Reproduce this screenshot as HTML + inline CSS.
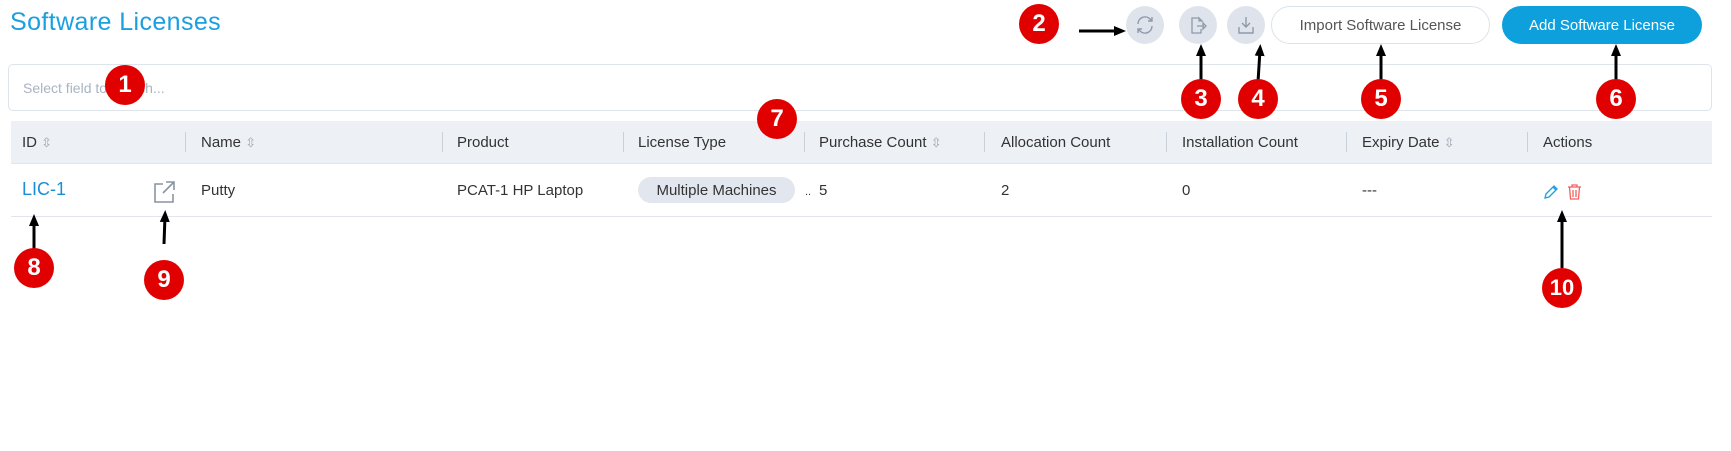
<!DOCTYPE html>
<html><head><meta charset="utf-8"><style>
*{box-sizing:border-box;margin:0;padding:0}
body{width:1731px;height:451px;background:#fff;font-family:"Liberation Sans",sans-serif;position:relative;overflow:hidden;color:#333}
.a{position:absolute}
.title{left:10px;top:8px;font-size:25px;color:#1a9fe0;letter-spacing:0.4px}
.circ{width:38px;height:38px;border-radius:50%;background:#dfe4ec;top:6px}
.btn{top:6px;height:38px;border-radius:19px;font-size:15px;display:flex;align-items:center;justify-content:center}
.search{left:8px;top:64px;width:1704px;height:47px;border:1px solid #dfe4ea;border-radius:5px}
.ph{left:23px;top:80px;font-size:14px;color:#a9b4c2}
.head{left:11px;top:121px;width:1701px;height:43px;background:#edf0f5;border-bottom:1px solid #e2e6ec}
.ht{top:134px;font-size:15px;color:#333}
.dv{top:132px;width:1px;height:20px;background:#c8d0da}
.rt{top:182px;font-size:15px;color:#333}
.rowb{left:11px;top:216px;width:1701px;height:1px;background:#e2e6ec}
.srt{font-size:13px;color:#a0a8b4}
.ann{width:40px;height:40px;border-radius:50%;background:#e00000;color:#fff;font-weight:bold;font-size:24px;display:flex;align-items:center;justify-content:center}
</style></head><body>
<div class="a title">Software Licenses</div>

<div class="a circ" style="left:1126px"><svg width="38" height="38" viewBox="0 0 38 38"><path d="M12 18a7 7 0 0 1 12-5l2 2M26 20a7 7 0 0 1-12 5l-2-2M26 11v4h-4M12 27v-4h4" fill="none" stroke="#8d99aa" stroke-width="1.4"/></svg></div>
<div class="a circ" style="left:1179px"><svg width="38" height="38" viewBox="0 0 38 38"><path d="M20 12h-7v15h9v-4M20 12l3 3h-3zM18 20h7M24 17l3 3-3 3z" fill="none" stroke="#8d99aa" stroke-width="1.3"/></svg></div>
<div class="a circ" style="left:1227px"><svg width="38" height="38" viewBox="0 0 38 38"><path d="M19 11v10M15 17l4 4 4-4M12 21v6h14v-6" fill="none" stroke="#8d99aa" stroke-width="1.4"/></svg></div>
<div class="a btn" style="left:1271px;width:219px;border:1px solid #dde3ea;background:#fff;color:#555">Import Software License</div>
<div class="a btn" style="left:1502px;width:200px;background:#0ea0dd;color:#fff">Add Software License</div>

<div class="a search"></div>
<div class="a ph">Select field to search...</div>

<div class="a head"></div>
<div class="a ht" style="left:22px">ID <span class="srt">⇳</span></div>
<div class="a dv" style="left:185px"></div>
<div class="a ht" style="left:201px">Name <span class="srt">⇳</span></div>
<div class="a dv" style="left:442px"></div>
<div class="a ht" style="left:457px">Product</div>
<div class="a dv" style="left:623px"></div>
<div class="a ht" style="left:638px">License Type</div>
<div class="a dv" style="left:804px"></div>
<div class="a ht" style="left:819px">Purchase Count <span class="srt">⇳</span></div>
<div class="a dv" style="left:984px"></div>
<div class="a ht" style="left:1001px">Allocation Count</div>
<div class="a dv" style="left:1166px"></div>
<div class="a ht" style="left:1182px">Installation Count</div>
<div class="a dv" style="left:1346px"></div>
<div class="a ht" style="left:1362px">Expiry Date <span class="srt">⇳</span></div>
<div class="a dv" style="left:1527px"></div>
<div class="a ht" style="left:1543px">Actions</div>

<div class="a" style="left:22px;top:179px;font-size:18px;color:#1a8fd6">LIC-1</div>
<svg class="a" style="left:152px;top:180px" width="26" height="24" viewBox="0 0 26 24"><path d="M11 4H3v18h18v-8M14 2h8v8M22 2L11 13" fill="none" stroke="#8a94a3" stroke-width="1.6"/></svg>
<div class="a rt" style="left:201px">Putty</div>
<div class="a rt" style="left:457px">PCAT-1 HP Laptop</div>
<div class="a" style="left:638px;top:177px;width:157px;height:26px;border-radius:13px;background:#e2e6ee;font-size:15px;color:#333;display:flex;align-items:center;justify-content:center">Multiple Machines</div>
<div class="a rt" style="left:805px;font-size:11px;top:186px">..</div>
<div class="a rt" style="left:819px">5</div>
<div class="a rt" style="left:1001px">2</div>
<div class="a rt" style="left:1182px">0</div>
<div class="a rt" style="left:1362px">---</div>
<svg class="a" style="left:1543px;top:184px" width="16" height="16" viewBox="0 0 16 16"><path d="M2 14l1-4 8-8 3 3-8 8zM10 3l3 3" fill="none" stroke="#1a9fe0" stroke-width="1.3"/></svg>
<svg class="a" style="left:1567px;top:184px" width="15" height="16" viewBox="0 0 15 16"><path d="M1 3h13M5 3V1h5v2M2.5 3l1 12h8l1-12M6 6v7M9 6v7" fill="none" stroke="#f06060" stroke-width="1.3"/></svg>
<div class="a rowb"></div>

<svg class="a" style="left:0;top:0" width="1731" height="451" viewBox="0 0 1731 451">
<defs><marker id="m" markerUnits="userSpaceOnUse" markerWidth="12" markerHeight="12" refX="6" refY="6" orient="auto"><path d="M0 1L12 6L0 11z" fill="#000"/></marker></defs>
<g stroke="#000" stroke-width="3" marker-end="url(#m)">
<line x1="1079" y1="31" x2="1120" y2="31"/>
<line x1="1201" y1="82" x2="1201" y2="50"/>
<line x1="1258" y1="82" x2="1260" y2="50"/>
<line x1="1381" y1="82" x2="1381" y2="50"/>
<line x1="1616" y1="82" x2="1616" y2="50"/>
<line x1="34" y1="250" x2="34" y2="220"/>
<line x1="164" y1="244" x2="165" y2="216"/>
<line x1="1562" y1="268" x2="1562" y2="216"/>
</g></svg>
<div class="a ann" style="left:105px;top:65px">1</div>
<div class="a ann" style="left:1019px;top:4px">2</div>
<div class="a ann" style="left:1181px;top:79px">3</div>
<div class="a ann" style="left:1238px;top:79px">4</div>
<div class="a ann" style="left:1361px;top:79px">5</div>
<div class="a ann" style="left:1596px;top:79px">6</div>
<div class="a ann" style="left:757px;top:99px">7</div>
<div class="a ann" style="left:14px;top:248px">8</div>
<div class="a ann" style="left:144px;top:260px">9</div>
<div class="a ann" style="left:1542px;top:268px;font-size:22px">10</div>
</body></html>
